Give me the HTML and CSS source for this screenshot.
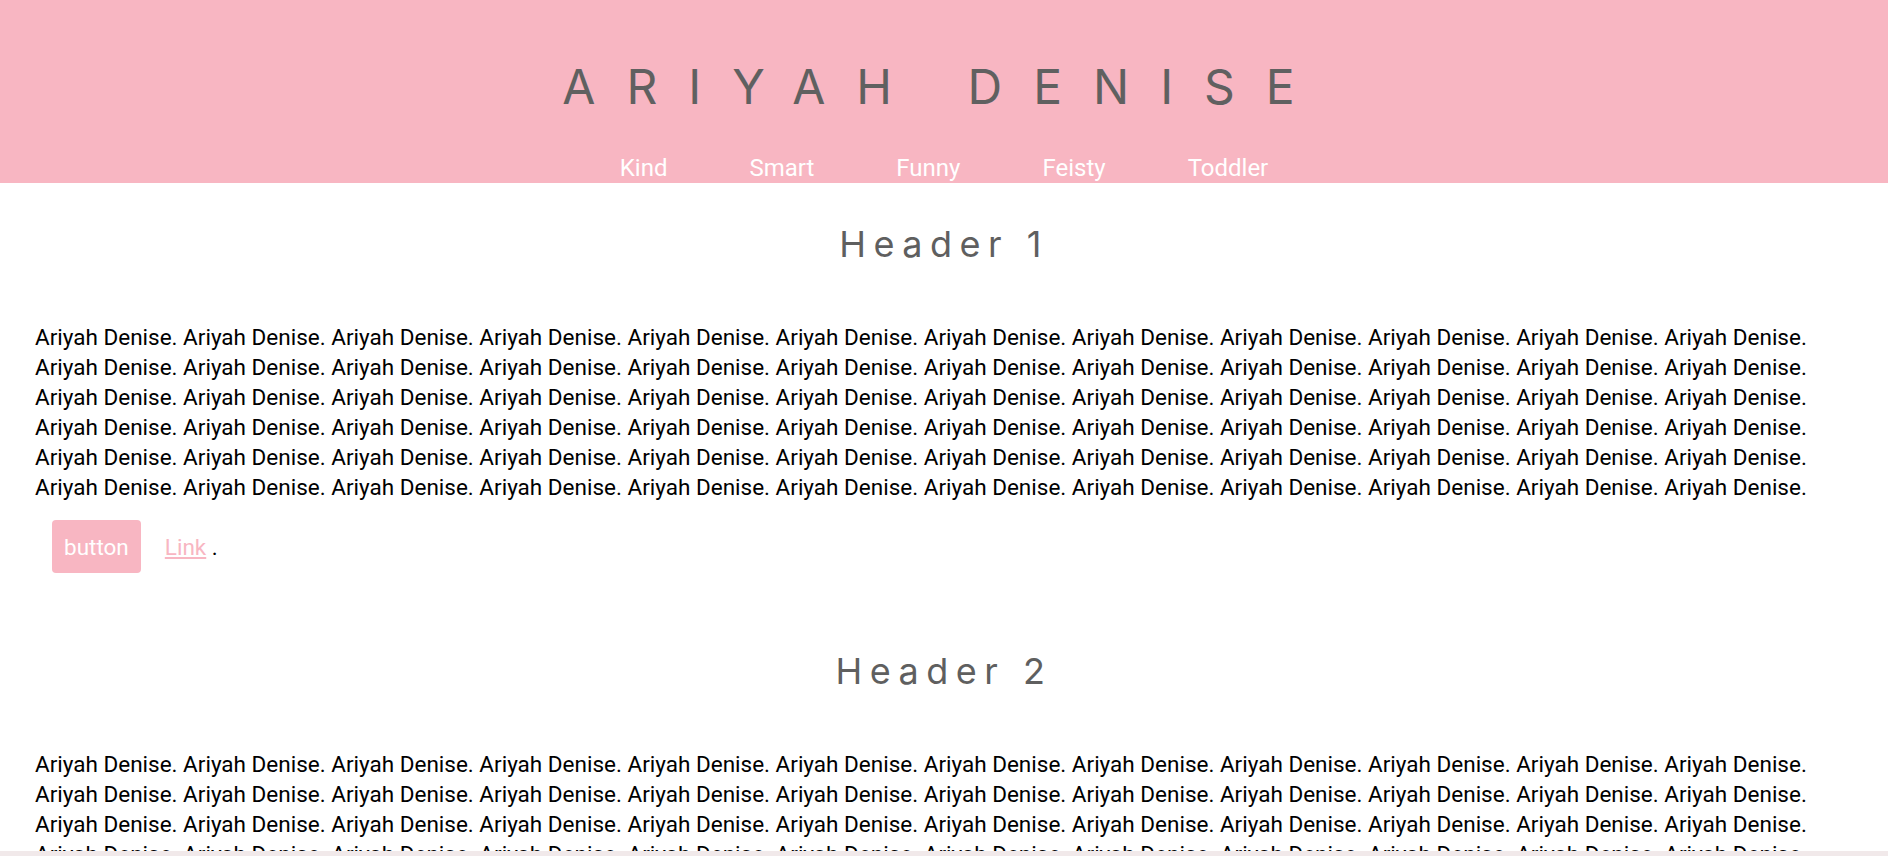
FILE: index.html
```html
<!DOCTYPE html>
<html lang="en">
<head>
<meta charset="utf-8">
<title>Ariyah Denise</title>
<link rel="stylesheet" href="styles.css">
</head>
<body>
<header class="site-header">
  <h1 class="site-title">ARIYAH DENISE</h1>
  <nav class="site-nav">
    <a class="nav-link" href="#">Kind</a>
    <a class="nav-link" href="#">Smart</a>
    <a class="nav-link" href="#">Funny</a>
    <a class="nav-link" href="#">Feisty</a>
    <a class="nav-link" href="#">Toddler</a>
  </nav>
</header>
<main class="content">
  <section class="section">
    <h2 class="section-title">Header 1</h2>
    <p class="body-text">Ariyah Denise. Ariyah Denise. Ariyah Denise. Ariyah Denise. Ariyah Denise. Ariyah Denise. Ariyah Denise. Ariyah Denise. Ariyah Denise. Ariyah Denise. Ariyah Denise. Ariyah Denise. Ariyah Denise. Ariyah Denise. Ariyah Denise. Ariyah Denise. Ariyah Denise. Ariyah Denise. Ariyah Denise. Ariyah Denise. Ariyah Denise. Ariyah Denise. Ariyah Denise. Ariyah Denise. Ariyah Denise. Ariyah Denise. Ariyah Denise. Ariyah Denise. Ariyah Denise. Ariyah Denise. Ariyah Denise. Ariyah Denise. Ariyah Denise. Ariyah Denise. Ariyah Denise. Ariyah Denise. Ariyah Denise. Ariyah Denise. Ariyah Denise. Ariyah Denise. Ariyah Denise. Ariyah Denise. Ariyah Denise. Ariyah Denise. Ariyah Denise. Ariyah Denise. Ariyah Denise. Ariyah Denise. Ariyah Denise. Ariyah Denise. Ariyah Denise. Ariyah Denise. Ariyah Denise. Ariyah Denise. Ariyah Denise. Ariyah Denise. Ariyah Denise. Ariyah Denise. Ariyah Denise. Ariyah Denise. Ariyah Denise. Ariyah Denise. Ariyah Denise. Ariyah Denise. Ariyah Denise. Ariyah Denise. Ariyah Denise. Ariyah Denise. Ariyah Denise. Ariyah Denise. Ariyah Denise. Ariyah Denise.</p>
    <div class="actions">
      <button class="btn" type="button">button</button>
      <span class="link-line"><a class="text-link" href="#">Link</a> .</span>
    </div>
  </section>
  <section class="section">
    <h2 class="section-title">Header 2</h2>
    <p class="body-text">Ariyah Denise. Ariyah Denise. Ariyah Denise. Ariyah Denise. Ariyah Denise. Ariyah Denise. Ariyah Denise. Ariyah Denise. Ariyah Denise. Ariyah Denise. Ariyah Denise. Ariyah Denise. Ariyah Denise. Ariyah Denise. Ariyah Denise. Ariyah Denise. Ariyah Denise. Ariyah Denise. Ariyah Denise. Ariyah Denise. Ariyah Denise. Ariyah Denise. Ariyah Denise. Ariyah Denise. Ariyah Denise. Ariyah Denise. Ariyah Denise. Ariyah Denise. Ariyah Denise. Ariyah Denise. Ariyah Denise. Ariyah Denise. Ariyah Denise. Ariyah Denise. Ariyah Denise. Ariyah Denise. Ariyah Denise. Ariyah Denise. Ariyah Denise. Ariyah Denise. Ariyah Denise. Ariyah Denise. Ariyah Denise. Ariyah Denise. Ariyah Denise. Ariyah Denise. Ariyah Denise. Ariyah Denise. Ariyah Denise. Ariyah Denise. Ariyah Denise. Ariyah Denise. Ariyah Denise. Ariyah Denise. Ariyah Denise. Ariyah Denise. Ariyah Denise. Ariyah Denise. Ariyah Denise. Ariyah Denise. Ariyah Denise. Ariyah Denise. Ariyah Denise. Ariyah Denise. Ariyah Denise. Ariyah Denise. Ariyah Denise. Ariyah Denise. Ariyah Denise. Ariyah Denise. Ariyah Denise. Ariyah Denise.</p>
  </section>
</main>
<div class="bottom-bar"></div>
</body>
</html>
```

FILE: styles.css
```css
html, body {
  margin: 0;
  padding: 0;
  background: #ffffff;
}

body {
  font-family: Roboto, "Liberation Sans", sans-serif;
  color: #000000;
  overflow: hidden;
}

.site-header {
  background: #f8b6c2;
  padding: 58px 0 1px;
  display: flex;
  flex-direction: column;
  align-items: center;
}

.site-title {
  margin: 0;
  font-family: Inter, "DejaVu Sans", sans-serif;
  font-weight: 400;
  font-size: 48px;
  line-height: 58px;
  letter-spacing: 31px;
  color: #606060;
}

.site-nav {
  margin-top: 38px;
  display: flex;
  justify-content: center;
  gap: 82px;
}

.nav-link {
  font-family: Roboto, sans-serif;
  font-size: 24px;
  line-height: 28px;
  color: #ffffff;
  text-decoration: none;
}

.content {
  padding: 0 35px;
}

.section {
  display: flex;
  flex-direction: column;
}

.section-title {
  margin: 39px 0 0;
  text-align: center;
  font-family: Inter, "DejaVu Sans", sans-serif;
  font-weight: 400;
  font-size: 36px;
  line-height: 44px;
  letter-spacing: 7.5px;
  color: #5f5f5f;
}

.section + .section .section-title {
  margin-top: 76px;
}

.body-text {
  margin: 56px 0 0;
  font-size: 22.5px;
  line-height: 30px;
}

.actions {
  margin-top: 18px;
  padding-left: 17px;
  display: flex;
  align-items: center;
  gap: 24px;
}

.btn {
  border: none;
  border-radius: 4px;
  background: #f8b6c2;
  color: #ffffff;
  font-family: Roboto, sans-serif;
  font-size: 22.5px;
  line-height: 30px;
  padding: 11.5px 12px;
}

.link-line {
  font-size: 22.5px;
  line-height: 30px;
}

.text-link {
  color: #f8b6c2;
  text-decoration: underline;
}

.bottom-bar {
  position: fixed;
  left: 0;
  right: 0;
  bottom: 0;
  height: 5px;
  background: #f1e9ea;
}
```
